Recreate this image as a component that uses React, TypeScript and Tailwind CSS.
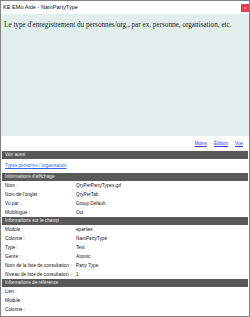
import React from "react";

const ui = { fontFamily: "'Liberation Sans', Arial, sans-serif" };

function Header({ children }: { children: React.ReactNode }) {
  return (
    <div className="h-[8px] bg-[#595959] text-[#ececec] text-[4.7px] leading-[8px] pl-[3px] whitespace-nowrap">
      {children}
    </div>
  );
}

function Row({ label, value }: { label: string; value?: string }) {
  return (
    <div className="flex h-[9px] items-center text-[4.7px] text-[#111] pl-[3px] pt-[1px] whitespace-nowrap">
      <div className="w-[71px] shrink-0">{label}</div>
      <div>{value}</div>
    </div>
  );
}

export default function App() {
  return (
    <div className="w-[250px] h-[317px] bg-white border border-[#7f8383] flex flex-col overflow-hidden" style={ui}>
      <div className="h-[13px] flex items-center justify-between bg-white pl-[2px]">
        <span className="text-[5.6px] text-[#111]">KE EMu Aide - NamPartyType</span>
        <div className="w-[8px] h-[8px] bg-[#d9474a] flex items-center justify-center text-white text-[4px] leading-none">x</div>
      </div>
      <div className="h-[122px] bg-[#e2eeec] pl-[3px] pt-[6px]">
        <p className="text-[7.2px] text-[#222] whitespace-nowrap" style={{ fontFamily: "'Liberation Serif', 'Times New Roman', serif" }}>
          Le type d'enregistrement du personnes/org., par ex. personne, organisation, etc.
        </p>
      </div>
      <div className="h-[15px] flex items-center justify-end gap-[7px] pr-[6px] text-[4.6px] text-[#3333ee] underline pt-[1px]">
        <span>Moins</span>
        <span>Édition</span>
        <span>Vue</span>
      </div>
      <div className="mx-[1px] flex flex-col">
        <Header>Voir aussi</Header>
        <div className="h-[14px] flex items-center pl-[3px] text-[4.6px] text-[#3366ee] underline">
          Types personne / organisation
        </div>
        <Header>Informations d'affichage</Header>
        <Row label="Nom :" value="QryPerPartyTypes.gd" />
        <Row label="Nom de l'onglet :" value="QryPerTab" />
        <Row label="Vu par :" value="Group Default" />
        <Row label="Multilingue :" value="Oui" />
        <Header>Informations sur le champ</Header>
        <Row label="Module :" value="eparties" />
        <Row label="Colonne :" value="NamPartyType" />
        <Row label="Type :" value="Text" />
        <Row label="Genre :" value="Atomic" />
        <Row label="Nom de la liste de consultation :" value="Party Type" />
        <Row label="Niveau de liste de consultation :" value="1" />
        <Header>Informations de référence</Header>
        <Row label="Lien :" />
        <Row label="Module :" />
        <Row label="Colonne :" />
      </div>
    </div>
  );
}
